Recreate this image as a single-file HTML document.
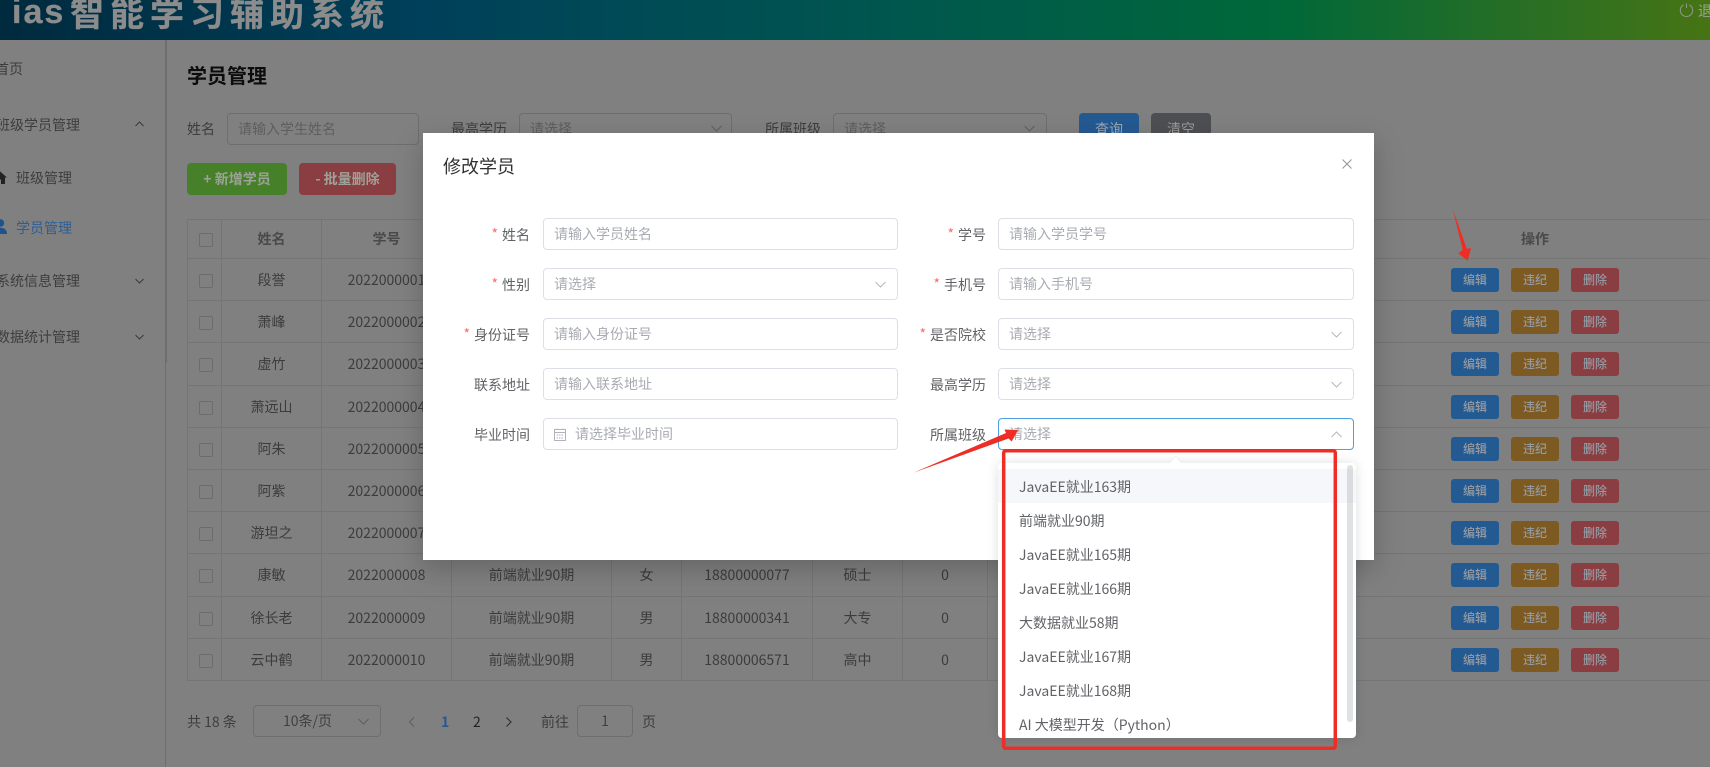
<!DOCTYPE html>
<html lang="zh">
<head>
<meta charset="utf-8">
<title>学员管理</title>
<style>
html,body{margin:0;padding:0;width:1710px;height:767px;overflow:hidden;background:#808080}
body{position:relative;font-family:"Noto Sans CJK SC","Liberation Sans",sans-serif;font-size:14px;color:#3a3a3a}
.a{position:absolute;white-space:nowrap}
.hd{left:0;top:0;width:1710px;height:40px;overflow:hidden;background:linear-gradient(to right,#002a3e 0,#00405a 427px,#005550 855px,#006839 1282px,#4f7510 1760px)}
.tt{color:#8c8c8c;font-weight:700;font-size:34px;line-height:40px;-webkit-text-stroke:.3px #8c8c8c}
.side{left:165px;top:40px;width:1px;height:727px;background:#6e6e6e}
.m{color:#3d3d3d;line-height:20px}
.box{box-sizing:border-box;height:32px;border:1px solid #6e6e6e;border-radius:4px;line-height:30px;color:#5e5e5e}
.btn{box-sizing:border-box;border-radius:4px;text-align:center;font-weight:700;color:#9da298;height:32px;line-height:32px}
table{position:absolute;left:187px;top:219px;border-collapse:separate;border-spacing:0;table-layout:fixed;width:1523px}
th,td{padding:0;text-align:center;border-bottom:1px solid #757575;border-right:1px solid #757575;box-sizing:border-box;color:#3c3c3c;font-weight:400}
th{height:40px;border-top:1px solid #757575;font-weight:700;color:#4a4a4a}
td:first-child,th:first-child{border-left:1px solid #757575}
td:last-child,th:last-child{border-right:none}
td:nth-last-child(2),th:nth-last-child(2){border-right:none}
.cb{display:inline-block;width:14px;height:14px;box-sizing:border-box;border:1px solid #6c6c6c;border-radius:2px;vertical-align:middle;margin-left:3px}
.o{display:inline-block;width:48px;height:24px;line-height:24px;border-radius:3px;font-size:12px;margin:0 6px;color:#959ba3;vertical-align:middle;font-weight:500}
.b1{background:#245a92}.b2{background:#7d5a22}.b3{background:#8a3e42}
.modal{left:423px;top:133px;width:951px;height:427px;background:#fff;box-shadow:0 12px 32px 4px rgba(0,0,0,.08),0 8px 20px rgba(0,0,0,.12)}
.lb{color:#606266;line-height:32px;text-align:right;width:120px}
.lb i{color:#f56c6c;font-style:normal;margin-right:4px;font-size:14px;position:relative;top:-1px}
.in{box-sizing:border-box;height:32px;width:356px;border:1px solid #dcdfe6;border-radius:4px;background:#fff;color:#a8abb2;line-height:30px;padding-left:10px}
.it{left:998px;width:358px;height:34px;line-height:34px;padding-left:21px;box-sizing:border-box;color:#606266;background:transparent}
svg{position:absolute;overflow:visible}
</style>
</head>
<body>
<div class="a hd"></div>
<div class="a tt" style="left:12px;top:-8px;letter-spacing:2px;font-family:'Liberation Sans',sans-serif">ias</div>
<div class="a tt" style="left:70px;top:-8px;letter-spacing:6px">智能学习辅助系统</div>
<svg style="left:1680px;top:3px" width="13" height="14" viewBox="0 0 13 14" fill="none" stroke="#8f9a8a" stroke-width="1"><path d="M3.6 1.8A6.2 6.2 0 1 0 9.4 1.8M6.5 0.5V5"/></svg>
<div class="a" style="left:1698px;top:1px;font-size:14px;line-height:20px;color:#9aa596">退出登录</div>

<div class="a side"></div>
<div class="a" style="left:165px;top:40px;width:2px;height:323px;background:#6e6e6e"></div>
<div class="a m" style="left:-5px;top:59px">首页</div>
<div class="a m" style="left:-4px;top:115px">班级学员管理</div>
<svg style="left:135px;top:121px" width="9" height="6" fill="none" stroke="#3a3a3a"><path d="M.5 5L4.5 1L8.5 5"/></svg>
<svg style="left:-8px;top:171px" width="15" height="13" viewBox="0 0 15 13" fill="#222"><path d="M7.5 0L15 6.5H13V13H9V8.5H6V13H2V6.5H0Z"/></svg>
<div class="a m" style="left:16px;top:168px">班级管理</div>
<svg style="left:-6px;top:219px" width="13" height="15" viewBox="0 0 13 15" fill="#20528c"><circle cx="6.5" cy="4" r="3.7"/><path d="M0 15C0 10.5 3 8.8 6.5 8.8S13 10.5 13 15Z"/></svg>
<div class="a m" style="left:16px;top:218px;color:#2b5d96">学员管理</div>
<div class="a m" style="left:-4px;top:271px">系统信息管理</div>
<svg style="left:135px;top:278px" width="9" height="6" fill="none" stroke="#3a3a3a"><path d="M.5 1L4.5 5L8.5 1"/></svg>
<div class="a m" style="left:-4px;top:327px">数据统计管理</div>
<svg style="left:135px;top:334px" width="9" height="6" fill="none" stroke="#3a3a3a"><path d="M.5 1L4.5 5L8.5 1"/></svg>

<div class="a" style="left:187px;top:60px;font-size:20px;font-weight:700;line-height:30px;color:#0c0c0c">学员管理</div>
<div class="a m" style="left:187px;top:119px">姓名</div>
<div class="a box" style="left:227px;top:113px;width:192px;padding-left:10px">请输入学生姓名</div>
<div class="a m" style="left:451px;top:119px">最高学历</div>
<div class="a box" style="left:519px;top:113px;width:213px;padding-left:10px">请选择</div>
<svg style="left:711px;top:125px" width="11" height="7" fill="none" stroke="#5e5e5e"><path d="M.5 1L5.5 6L10.5 1"/></svg>
<div class="a m" style="left:765px;top:119px">所属班级</div>
<div class="a box" style="left:833px;top:113px;width:214px;padding-left:10px">请选择</div>
<svg style="left:1024px;top:125px" width="11" height="7" fill="none" stroke="#5e5e5e"><path d="M.5 1L5.5 6L10.5 1"/></svg>
<div class="a btn b1" style="left:1079px;top:113px;width:60px;font-weight:400;color:#9aa8b8">查询</div>
<div class="a btn" style="left:1151px;top:113px;width:60px;background:#4e4f53;font-weight:400;color:#9a9a9a">清空</div>
<div class="a btn" style="left:187px;top:163px;width:100px;background:#46812a">+ 新增学员</div>
<div class="a btn" style="left:299px;top:163px;width:97px;background:#8a3e42">- 批量删除</div>

<table>
<colgroup><col style="width:35px"><col style="width:100px"><col style="width:130px"><col style="width:160px"><col style="width:70px"><col style="width:131px"><col style="width:90px"><col style="width:85px"><col style="width:372px"><col style="width:350px"></colgroup>
<tr><th><span class="cb"></span></th><th>姓名</th><th>学号</th><th>班级</th><th>性别</th><th>手机号</th><th>最高学历</th><th>违纪次数</th><th></th><th>操作</th></tr>
<tr style="height:42px"><td><span class="cb"></span></td><td>段誉</td><td>2022000001</td><td>前端就业90期</td><td>男</td><td>18800000001</td><td>本科</td><td>0</td><td></td><td><span class="o b1">编辑</span><span class="o b2">违纪</span><span class="o b3">删除</span></td></tr>
<tr style="height:42px"><td><span class="cb"></span></td><td>萧峰</td><td>2022000002</td><td>前端就业90期</td><td>男</td><td>18800000002</td><td>本科</td><td>0</td><td></td><td><span class="o b1">编辑</span><span class="o b2">违纪</span><span class="o b3">删除</span></td></tr>
<tr style="height:43px"><td><span class="cb"></span></td><td>虚竹</td><td>2022000003</td><td>前端就业90期</td><td>男</td><td>18800000003</td><td>本科</td><td>0</td><td></td><td><span class="o b1">编辑</span><span class="o b2">违纪</span><span class="o b3">删除</span></td></tr>
<tr style="height:42px"><td><span class="cb"></span></td><td>萧远山</td><td>2022000004</td><td>前端就业90期</td><td>男</td><td>18800000004</td><td>本科</td><td>0</td><td></td><td><span class="o b1">编辑</span><span class="o b2">违纪</span><span class="o b3">删除</span></td></tr>
<tr style="height:42px"><td><span class="cb"></span></td><td>阿朱</td><td>2022000005</td><td>前端就业90期</td><td>女</td><td>18800000005</td><td>本科</td><td>0</td><td></td><td><span class="o b1">编辑</span><span class="o b2">违纪</span><span class="o b3">删除</span></td></tr>
<tr style="height:42px"><td><span class="cb"></span></td><td>阿紫</td><td>2022000006</td><td>前端就业90期</td><td>女</td><td>18800000006</td><td>本科</td><td>0</td><td></td><td><span class="o b1">编辑</span><span class="o b2">违纪</span><span class="o b3">删除</span></td></tr>
<tr style="height:42px"><td><span class="cb"></span></td><td>游坦之</td><td>2022000007</td><td>前端就业90期</td><td>男</td><td>18800000007</td><td>本科</td><td>0</td><td></td><td><span class="o b1">编辑</span><span class="o b2">违纪</span><span class="o b3">删除</span></td></tr>
<tr style="height:43px"><td><span class="cb"></span></td><td>康敏</td><td>2022000008</td><td>前端就业90期</td><td>女</td><td>18800000077</td><td>硕士</td><td>0</td><td></td><td><span class="o b1">编辑</span><span class="o b2">违纪</span><span class="o b3">删除</span></td></tr>
<tr style="height:42px"><td><span class="cb"></span></td><td>徐长老</td><td>2022000009</td><td>前端就业90期</td><td>男</td><td>18800000341</td><td>大专</td><td>0</td><td></td><td><span class="o b1">编辑</span><span class="o b2">违纪</span><span class="o b3">删除</span></td></tr>
<tr style="height:42px"><td><span class="cb"></span></td><td>云中鹤</td><td>2022000010</td><td>前端就业90期</td><td>男</td><td>18800006571</td><td>高中</td><td>0</td><td></td><td><span class="o b1">编辑</span><span class="o b2">违纪</span><span class="o b3">删除</span></td></tr>
</table>

<div class="a m" style="left:187px;top:712px">共 18 条</div>
<div class="a box" style="left:253px;top:705px;width:128px;padding-left:29px;color:#3f3f3f">10条/页</div>
<svg style="left:358px;top:718px" width="11" height="7" fill="none" stroke="#5e5e5e"><path d="M.5 1L5.5 6L10.5 1"/></svg>
<svg style="left:409px;top:717px" width="6" height="10" fill="none" stroke="#5e5e5e"><path d="M5 .5L.5 5L5 9.5"/></svg>
<div class="a m" style="left:441px;top:712px;font-weight:700;color:#28588f">1</div>
<div class="a m" style="left:473px;top:712px;color:#222">2</div>
<svg style="left:506px;top:717px" width="6" height="10" fill="none" stroke="#2a2a2a"><path d="M.5 .5L5 5L.5 9.5"/></svg>
<div class="a m" style="left:541px;top:712px">前往</div>
<div class="a box" style="left:577px;top:705px;width:56px;text-align:center;color:#3f3f3f">1</div>
<div class="a m" style="left:642px;top:712px">页</div>

<div class="a modal"></div>
<div class="a" style="left:443px;top:153px;font-size:18px;line-height:26px;color:#303133">修改学员</div>
<svg style="left:1342px;top:159px" width="10" height="10" fill="none" stroke="#909399"><path d="M.5 .5L9.5 9.5M9.5 .5L.5 9.5"/></svg>

<div class="a lb" style="left:410px;top:219px"><i>*</i>姓名</div>
<div class="a in" style="left:543px;top:218px;width:355px">请输入学员姓名</div>
<div class="a lb" style="left:410px;top:269px"><i>*</i>性别</div>
<div class="a in" style="left:543px;top:268px;width:355px">请选择</div>
<svg style="left:875px;top:281px" width="11" height="7" fill="none" stroke="#b4b7bd"><path d="M.5 1L5.5 6L10.5 1"/></svg>
<div class="a lb" style="left:410px;top:319px"><i>*</i>身份证号</div>
<div class="a in" style="left:543px;top:318px;width:355px">请输入身份证号</div>
<div class="a lb" style="left:410px;top:369px">联系地址</div>
<div class="a in" style="left:543px;top:368px;width:355px">请输入联系地址</div>
<div class="a lb" style="left:410px;top:419px">毕业时间</div>
<div class="a in" style="left:543px;top:418px;width:355px;padding-left:31px">请选择毕业时间</div>
<svg style="left:554px;top:428px" width="12" height="13" viewBox="0 0 12 13" fill="none" stroke="#b0b3b9"><path d="M.5 1.5H11.5V12.5H.5ZM.5 4.5H11.5M3 .5V2M9 .5V2"/><path d="M2.5 7H9.5M2.5 10H9.5" stroke-dasharray="1.5 1"/></svg>

<div class="a lb" style="left:866px;top:219px"><i>*</i>学号</div>
<div class="a in" style="left:998px;top:218px">请输入学员学号</div>
<div class="a lb" style="left:866px;top:269px"><i>*</i>手机号</div>
<div class="a in" style="left:998px;top:268px">请输入手机号</div>
<div class="a lb" style="left:866px;top:319px"><i>*</i>是否院校</div>
<div class="a in" style="left:998px;top:318px">请选择</div>
<svg style="left:1331px;top:331px" width="11" height="7" fill="none" stroke="#b4b7bd"><path d="M.5 1L5.5 6L10.5 1"/></svg>
<div class="a lb" style="left:866px;top:369px">最高学历</div>
<div class="a in" style="left:998px;top:368px">请选择</div>
<svg style="left:1331px;top:381px" width="11" height="7" fill="none" stroke="#b4b7bd"><path d="M.5 1L5.5 6L10.5 1"/></svg>
<div class="a lb" style="left:866px;top:419px">所属班级</div>
<div class="a in" style="left:998px;top:418px;border-color:#4f9fdc">请选择</div>
<svg style="left:1331px;top:431px" width="11" height="7" fill="none" stroke="#b4b7bd"><path d="M.5 6L5.5 1L10.5 6"/></svg>

<div class="a" style="left:998px;top:463px;width:358px;height:275px;background:#fff;border-radius:4px;box-shadow:0 0 12px rgba(0,0,0,.12)"></div>
<div class="a" style="left:1171px;top:459px;width:9px;height:9px;background:#fff;transform:rotate(45deg);box-shadow:-1px -1px 0 rgba(0,0,0,.03)"></div>
<div class="a" style="left:998px;top:463px;width:358px;height:275px;overflow:hidden;background:transparent">
<div class="a" style="left:0;top:6px;width:358px;height:34px;background:#f5f7fa"></div>
<div class="a it" style="left:0;top:7px">JavaEE就业163期</div>
<div class="a it" style="left:0;top:41px">前端就业90期</div>
<div class="a it" style="left:0;top:75px">JavaEE就业165期</div>
<div class="a it" style="left:0;top:109px">JavaEE就业166期</div>
<div class="a it" style="left:0;top:143px">大数据就业58期</div>
<div class="a it" style="left:0;top:177px">JavaEE就业167期</div>
<div class="a it" style="left:0;top:211px">JavaEE就业168期</div>
<div class="a it" style="left:0;top:245px">AI 大模型开发（Python）</div>
<div class="a" style="left:349px;top:2px;width:6px;height:257px;border-radius:3px;background:rgba(144,147,153,.28)"></div>
</div>

<svg style="left:0;top:0" width="1710" height="767">
<rect x="1003.7" y="450.7" width="331.6" height="297.6" rx="2" fill="none" stroke="#ee2e24" stroke-width="3.5"/>
<polygon fill="#ee2e24" points="913.3,472.7 1006,433 1004.5,429.5 1018,430 1011.7,441.5 1008.5,438.5"/>
<polygon fill="#ee2e24" points="1452.7,209.3 1466.8,248.8 1471,248.3 1467.7,260.7 1458.3,253.3 1462.8,250"/>
</svg>
</body>
</html>
